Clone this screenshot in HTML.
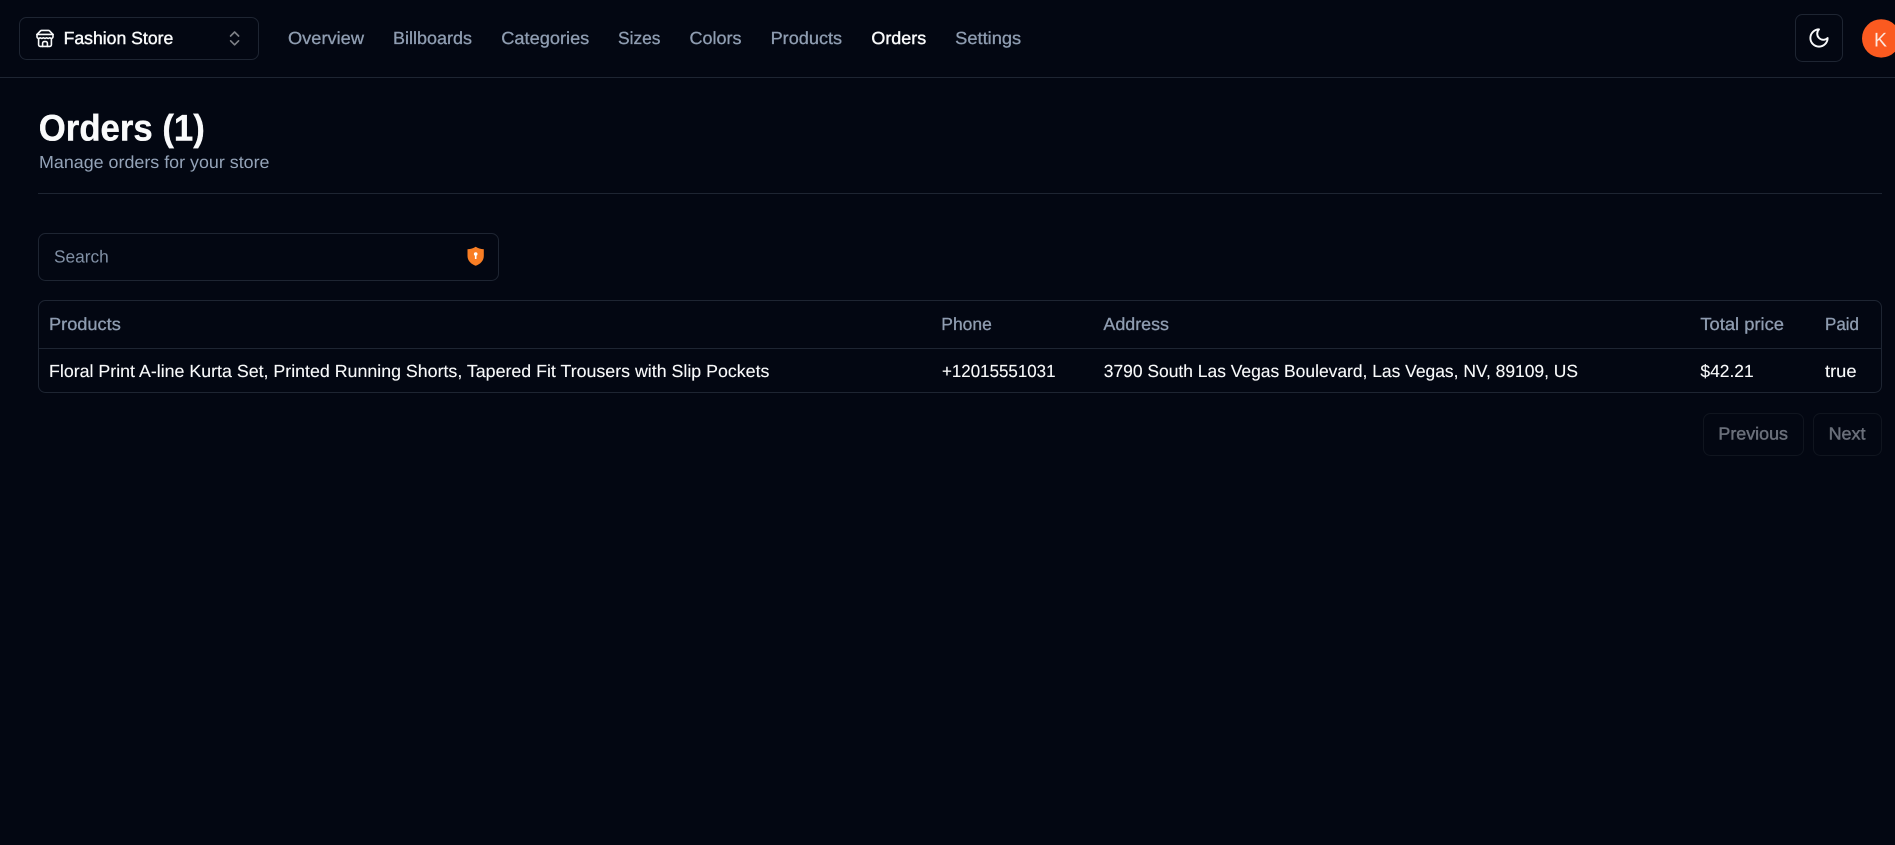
<!DOCTYPE html>
<html lang="en">
<head>
<meta charset="utf-8">
<title>Orders</title>
<style>
html,body{margin:0;padding:0;width:1895px;height:845px;overflow:hidden;background:#030712}
svg{display:block}
text{font-family:"Liberation Sans",Arial,sans-serif;font-size:17.5px;text-rendering:geometricPrecision}
.m{fill:#94a3b8}
.mm{fill:#8f9db1;stroke:#8f9db1;stroke-width:.3}
.w{fill:#f9fafb;stroke:#f9fafb;stroke-width:.1}
.wm{fill:#f9fafb;stroke:#f9fafb;stroke-width:.4}
.d{fill:#6a6f7a;stroke:#6a6f7a;stroke-width:.45}
.b{fill:none;stroke:#1e2532;stroke-width:1}
.i{fill:none;stroke:#f9fafb;stroke-linecap:round;stroke-linejoin:round}
</style>
</head>
<body>
<svg width="1895" height="845" viewBox="0 0 1895 845" xmlns="http://www.w3.org/2000/svg">
<rect width="1895" height="845" fill="#030712"/>

<!-- header -->
<rect x="0" y="77" width="1895" height="1" fill="#1e2532"/>
<rect class="b" x="19.5" y="17.5" width="239" height="42" rx="7"/>
<svg x="35.4" y="28.8" width="19.2" height="19.2" viewBox="0 0 24 24" class="i" stroke-width="2">
<path d="m2 7 4.41-4.41A2 2 0 0 1 7.83 2h8.34a2 2 0 0 1 1.42.59L22 7"/>
<path d="M4 12v8a2 2 0 0 0 2 2h12a2 2 0 0 0 2-2v-8"/>
<path d="M15 22v-4a2 2 0 0 0-2-2h-2a2 2 0 0 0-2 2v4"/>
<path d="M2 7h20"/>
<path d="M22 7v3a2 2 0 0 1-2 2v0a2.7 2.7 0 0 1-1.59-.63.7.7 0 0 0-.82 0A2.7 2.7 0 0 1 16 12a2.7 2.7 0 0 1-1.59-.63.7.7 0 0 0-.82 0A2.7 2.7 0 0 1 12 12a2.7 2.7 0 0 1-1.59-.63.7.7 0 0 0-.82 0A2.7 2.7 0 0 1 8 12a2.7 2.7 0 0 1-1.59-.63.7.7 0 0 0-.82 0A2.7 2.7 0 0 1 4 12v0a2 2 0 0 1-2-2V7"/>
</svg>
<text class="wm" x="63.6" y="44" textLength="109.7" lengthAdjust="spacingAndGlyphs">Fashion Store</text>
<svg x="225" y="28.8" width="19.2" height="19.2" viewBox="0 0 24 24" class="i" stroke-width="2" opacity=".5">
<path d="m7 15 5 5 5-5"/><path d="m7 9 5-5 5 5"/>
</svg>

<text class="mm" x="288" y="44" textLength="76" lengthAdjust="spacingAndGlyphs">Overview</text>
<text class="mm" x="393" y="44" textLength="79" lengthAdjust="spacingAndGlyphs">Billboards</text>
<text class="mm" x="501.3" y="44" textLength="88" lengthAdjust="spacingAndGlyphs">Categories</text>
<text class="mm" x="618" y="44" textLength="42.5" lengthAdjust="spacingAndGlyphs">Sizes</text>
<text class="mm" x="689.5" y="44" textLength="52" lengthAdjust="spacingAndGlyphs">Colors</text>
<text class="mm" x="770.6" y="44" textLength="71.5" lengthAdjust="spacingAndGlyphs">Products</text>
<text class="wm" x="871.4" y="44" textLength="54.8" lengthAdjust="spacingAndGlyphs">Orders</text>
<text class="mm" x="955.2" y="44" textLength="66" lengthAdjust="spacingAndGlyphs">Settings</text>

<rect class="b" x="1795.5" y="14.5" width="47" height="47" rx="7"/>
<svg x="1807.5" y="26.5" width="23" height="23" viewBox="0 0 24 24" class="i" stroke-width="2">
<path d="M12 3a6 6 0 0 0 9 9 9 9 0 1 1-9-9Z"/>
</svg>
<circle cx="1881.2" cy="38.4" r="19.2" fill="#fb5a20"/>
<text x="1874" y="46.6" style="font-size:19.8px;fill:#fde8df" textLength="13" lengthAdjust="spacingAndGlyphs">K</text>

<!-- heading -->
<text x="38.8" y="140.5" style="font-size:37px;font-weight:700;fill:#f9fafb;stroke:#f9fafb;stroke-width:.4" textLength="166" lengthAdjust="spacingAndGlyphs">Orders (1)</text>
<text class="m" x="39" y="168" textLength="230.5" lengthAdjust="spacingAndGlyphs">Manage orders for your store</text>
<rect x="38" y="193" width="1844" height="1" fill="#1e2532"/>

<!-- search -->
<rect class="b" x="38.5" y="233.5" width="460" height="47" rx="7"/>
<text x="54" y="262.7" style="fill:#8190a5" textLength="54.8" lengthAdjust="spacingAndGlyphs">Search</text>
<path d="M475.7 246.8C478 248.3 480.5 249 483.8 249.3V256C483.8 261 480 264.2 475.7 265.8C471.4 264.2 467.5 261 467.5 256V249.3C470.9 249 473.4 248.3 475.7 246.8Z" fill="#f97e24"/>
<circle cx="475.7" cy="254" r="1.8" fill="#fff"/>
<rect x="474.9" y="254" width="1.6" height="5" fill="#fff"/>

<!-- table -->
<rect class="b" x="38.5" y="300.5" width="1843" height="92" rx="7"/>
<rect x="39" y="348" width="1842" height="1" fill="#1e2532"/>
<text class="mm" x="49" y="330" textLength="71.8" lengthAdjust="spacingAndGlyphs">Products</text>
<text class="mm" x="941.3" y="330" textLength="50.5" lengthAdjust="spacingAndGlyphs">Phone</text>
<text class="mm" x="1103.4" y="330" textLength="65.6" lengthAdjust="spacingAndGlyphs">Address</text>
<text class="mm" x="1700.4" y="330" textLength="83.6" lengthAdjust="spacingAndGlyphs">Total price</text>
<text class="mm" x="1825" y="330" textLength="34" lengthAdjust="spacingAndGlyphs">Paid</text>

<text class="w" x="49" y="377" textLength="720.4" lengthAdjust="spacingAndGlyphs">Floral Print A-line Kurta Set, Printed Running Shorts, Tapered Fit Trousers with Slip Pockets</text>
<text class="w" x="942" y="377" textLength="113.5" lengthAdjust="spacingAndGlyphs">+12015551031</text>
<text class="w" x="1103.8" y="377" textLength="474.2" lengthAdjust="spacingAndGlyphs">3790 South Las Vegas Boulevard, Las Vegas, NV, 89109, US</text>
<text class="w" x="1700.4" y="377" textLength="53.3" lengthAdjust="spacingAndGlyphs">$42.21</text>
<text class="w" x="1825" y="377" textLength="31.5" lengthAdjust="spacingAndGlyphs">true</text>

<!-- pagination -->
<rect x="1703.5" y="413.5" width="100" height="42" rx="7" fill="none" stroke="#10151f"/>
<rect x="1813.5" y="413.5" width="68" height="42" rx="7" fill="none" stroke="#10151f"/>
<text class="d" x="1718.4" y="439.6" textLength="69.6" lengthAdjust="spacingAndGlyphs">Previous</text>
<text class="d" x="1828.6" y="439.6" textLength="36.9" lengthAdjust="spacingAndGlyphs">Next</text>
</svg>
</body>
</html>
